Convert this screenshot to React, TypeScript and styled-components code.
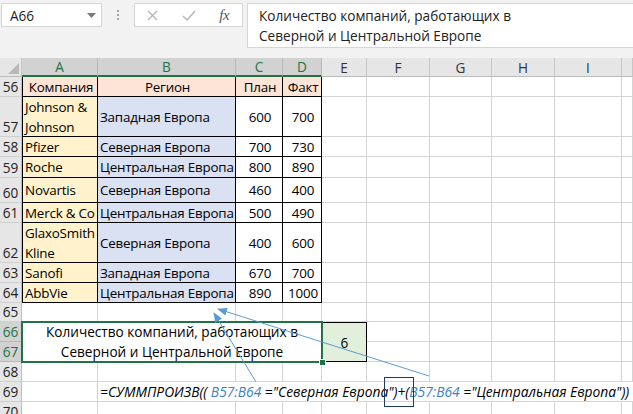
import React from "react";
import styled, { createGlobalStyle } from "styled-components";

const FONT = `"Open Sans", "Noto Sans", "Liberation Sans", sans-serif`;

const GlobalStyle = createGlobalStyle`
  html, body { margin: 0; padding: 0; background: #fff; }
  body { font-family: ${FONT}; overflow: hidden; }
  *, *::before, *::after { box-sizing: border-box; }
`;

const Root = styled.div`
  position: relative;
  width: 633px;
  height: 414px;
  overflow: hidden;
  background: #fff;
  font-family: ${FONT};
`;

/* ---------- formula bar ---------- */
const TopBar = styled.div`
  display: flex;
  align-items: flex-start;
  height: 58px;
  padding: 3px 0 0 1px;
  background: #f2f2f2;
`;

const NameBox = styled.div`
  display: flex;
  align-items: center;
  justify-content: space-between;
  width: 101px;
  height: 24px;
  padding: 0 5px 0 8px;
  background: #fff;
  border: 1px solid #d6d6d6;
  font-size: 13.6px;
  color: #222;
`;

const Grip = styled.div`
  width: 32px;
  height: 24px;
  display: flex;
  flex-direction: column;
  align-items: center;
  justify-content: center;
  gap: 2px;
`;

const GripDot = styled.span`
  width: 2px;
  height: 2px;
  background: #a6a6a6;
`;

const FxBox = styled.div`
  display: flex;
  width: 109px;
  height: 24px;
  background: #fff;
  border: 1px solid #d6d6d6;
`;

const FxSlot = styled.div`
  flex: 1;
  display: flex;
  align-items: center;
  justify-content: center;
`;

const FxLabel = styled.span`
  font-family: "Liberation Serif", "DejaVu Serif", serif;
  font-style: italic;
  font-size: 15px;
  color: #555;
  letter-spacing: -0.5px;
`;

const FormulaInput = styled.div`
  flex: 1;
  margin-left: 4px;
  height: 45px;
  padding: 2px 0 0 11px;
  background: #fff;
  border: 1px solid #d6d6d6;
  border-right: none;
  font-size: 13.6px;
  line-height: 20px;
  color: #222;
  white-space: pre;
`;

/* ---------- sheet grid ---------- */
const Sheet = styled.div`
  display: grid;
  grid-template-columns: 22px 76px 138px 47px 39px 45px 63px 62px 63px 67px 1fr;
  grid-template-rows: 19px 20px 40px 20px 21px 25px 20px 40px 20px 20px 19px 20px 20px 20px 20px 20px;
  font-size: 13.4px;
  line-height: 19px;
`;

const Corner = styled.div`
  background: #e6e6e6;
  border-right: 1px solid #c6c6c6;
  border-bottom: 1px solid #bdbdbd;
  display: flex;
  align-items: flex-end;
  justify-content: flex-end;
  padding: 0 2px 2px 0;
`;

const ColHead = styled.div<{ $sel?: boolean }>`
  display: flex;
  align-items: center;
  justify-content: center;
  font-size: 13.6px;
  background: ${(p) => (p.$sel ? "#d2d2d2" : "#e6e6e6")};
  color: ${(p) => (p.$sel ? "#217346" : "#333")};
  border-right: 1px solid ${(p) => (p.$sel ? "#b8b8b8" : "#c6c6c6")};
  border-bottom: ${(p) => (p.$sel ? "2px solid #217346" : "1px solid #bdbdbd")};
`;

const RowHead = styled.div<{ $sel?: boolean }>`
  display: flex;
  align-items: flex-end;
  justify-content: center;
  font-size: 13.6px;
  background: ${(p) => (p.$sel ? "#d2d2d2" : "#e6e6e6")};
  color: ${(p) => (p.$sel ? "#217346" : "#222")};
  border-right: 1px solid #bdbdbd;
  border-bottom: 1px solid ${(p) => (p.$sel ? "#b8b8b8" : "#cfcfcf")};
`;

const Cell = styled.div<{
  $fill?: string;
  $center?: boolean;
  $table?: boolean;
  $leftEdge?: boolean;
}>`
  display: flex;
  align-items: center;
  justify-content: ${(p) => (p.$center ? "center" : "flex-start")};
  text-align: ${(p) => (p.$center ? "center" : "left")};
  padding: 0 0 0 2px;
  background: ${(p) => p.$fill ?? "#fff"};
  border-right: 1px solid ${(p) => (p.$table ? "#000" : "#d4d4d4")};
  border-bottom: 1px solid ${(p) => (p.$table ? "#000" : "#d4d4d4")};
  border-left: ${(p) => (p.$leftEdge ? "1px solid #000" : "none")};
  color: #000;
  letter-spacing: -0.2px;
  white-space: pre;
  line-height: 20px;
  overflow: hidden;
`;

const NoteCell = styled.div`
  position: relative;
  grid-column: 2 / 6;
  grid-row: 12 / 14;
  display: flex;
  align-items: center;
  justify-content: center;
  text-align: center;
  white-space: pre;
  font-size: 13.6px;
  line-height: 20px;
  background: #fff;
  color: #000;
  z-index: 2;

  &::after {
    content: "";
    position: absolute;
    inset: -1px -1px -1px -1px;
    border: 2px solid #217346;
  }
  &::before {
    content: "";
    position: absolute;
    right: -4px;
    bottom: -4px;
    width: 7px;
    height: 7px;
    background: #217346;
    border: 1px solid #fff;
    z-index: 3;
  }
`;

const ResultCell = styled.div`
  grid-column: 6 / 7;
  grid-row: 12 / 14;
  display: flex;
  align-items: center;
  justify-content: center;
  font-size: 13.6px;
  background: #e2efda;
  border: 1px solid #000;
  color: #000;
  z-index: 1;
`;

const FormulaCell = styled.div`
  grid-column: span 9;
  display: flex;
  align-items: center;
  padding-left: 2px;
  border-bottom: 1px solid #d4d4d4;
  font-size: 13.8px;
  font-style: italic;
  white-space: pre;
  color: #000;
  overflow: visible;
`;

const Ref = styled.span`
  color: #3f7fc4;
`;

const Boxed = styled.span`
  position: relative;

  &::after {
    content: "";
    position: absolute;
    left: -4px;
    right: -5px;
    top: -5px;
    bottom: -6px;
    border: 1.5px solid #1f3a60;
  }
`;

const Arrows = styled.svg`
  position: absolute;
  left: 0;
  top: 0;
  pointer-events: none;
  z-index: 5;
`;

/* ---------- data ---------- */
const COLS = ["A", "B", "C", "D", "E", "F", "G", "H", "I", "J"];
const SEL_COLS = ["A", "B", "C", "D"];

type DataRow = { n: number; company: string; region: string; plan: number; fact: number };

const DATA: DataRow[] = [
  { n: 57, company: "Johnson &\nJohnson", region: "Западная Европа", plan: 600, fact: 700 },
  { n: 58, company: "Pfizer", region: "Северная Европа", plan: 700, fact: 730 },
  { n: 59, company: "Roche", region: "Центральная Европа", plan: 800, fact: 890 },
  { n: 60, company: "Novartis", region: "Северная Европа", plan: 460, fact: 400 },
  { n: 61, company: "Merck & Co", region: "Центральная Европа", plan: 500, fact: 490 },
  { n: 62, company: "GlaxoSmith\nKline", region: "Северная Европа", plan: 400, fact: 600 },
  { n: 63, company: "Sanofi", region: "Западная Европа", plan: 670, fact: 700 },
  { n: 64, company: "AbbVie", region: "Центральная Европа", plan: 890, fact: 1000 },
];

const Blanks = ({ count, prefix }: { count: number; prefix: string }) => (
  <>
    {Array.from({ length: count }, (_, i) => (
      <Cell key={`${prefix}-${i}`} />
    ))}
  </>
);

const PEACH = "#fce4d6";
const YELLOW = "#fff2cc";
const BLUE = "#d9e1f2";

export default function App() {
  return (
    <Root>
      <GlobalStyle />
      <TopBar>
        <NameBox>
          <span>A66</span>
          <svg width="9" height="5" viewBox="0 0 9 5">
            <path d="M0 0 H9 L4.5 5 Z" fill="#7a7a7a" />
          </svg>
        </NameBox>
        <Grip>
          <GripDot />
          <GripDot />
          <GripDot />
        </Grip>
        <FxBox>
          <FxSlot>
            <svg width="11" height="11" viewBox="0 0 11 11">
              <path d="M1 1 L10 10 M10 1 L1 10" stroke="#b5b5b5" strokeWidth="1.3" />
            </svg>
          </FxSlot>
          <FxSlot>
            <svg width="14" height="11" viewBox="0 0 14 11">
              <path d="M1 6 L5 10 L13 1" stroke="#b5b5b5" strokeWidth="1.4" fill="none" />
            </svg>
          </FxSlot>
          <FxSlot>
            <FxLabel>fx</FxLabel>
          </FxSlot>
        </FxBox>
        <FormulaInput>{"Количество компаний, работающих в\nСеверной и Центральной Европе"}</FormulaInput>
      </TopBar>

      <Sheet>
        <Corner>
          <svg width="11" height="11" viewBox="0 0 11 11">
            <path d="M11 0 V11 H0 Z" fill="#b9b9b9" />
          </svg>
        </Corner>
        {COLS.map((c) => (
          <ColHead key={c} $sel={SEL_COLS.includes(c)}>
            {c === "J" ? "" : c}
          </ColHead>
        ))}

        {/* row 56 : table header */}
        <RowHead>56</RowHead>
        <Cell $table $leftEdge $center $fill={PEACH}>Компания</Cell>
        <Cell $table $center $fill={PEACH}>Регион</Cell>
        <Cell $table $center $fill={PEACH}>План</Cell>
        <Cell $table $center $fill={PEACH}>Факт</Cell>
        <Blanks count={6} prefix="r56" />

        {DATA.map((r) => (
          <React.Fragment key={r.n}>
            <RowHead>{r.n}</RowHead>
            <Cell $table $leftEdge $fill={YELLOW}>{r.company}</Cell>
            <Cell $table $fill={BLUE}>{r.region}</Cell>
            <Cell $table $center>{r.plan}</Cell>
            <Cell $table $center>{r.fact}</Cell>
            <Blanks count={6} prefix={`r${r.n}`} />
          </React.Fragment>
        ))}

        <RowHead>65</RowHead>
        <Blanks count={10} prefix="r65" />

        <NoteCell>{"Количество компаний, работающих в\nСеверной и Центральной Европе"}</NoteCell>
        <ResultCell>6</ResultCell>

        <RowHead $sel>66</RowHead>
        <Blanks count={5} prefix="r66" />
        <RowHead $sel>67</RowHead>
        <Blanks count={5} prefix="r67" />

        <RowHead>68</RowHead>
        <Blanks count={10} prefix="r68" />

        <RowHead>69</RowHead>
        <Cell />
        <FormulaCell>
          {"=СУММПРОИЗВ(( "}
          <Ref>B57:B64</Ref>
          {' ="Северная Европа'}
          <Boxed>{'")+('}</Boxed>
          {" "}
          <Ref>B57:B64</Ref>
          {' ="Центральная Европа"))'}
        </FormulaCell>

        <RowHead>70</RowHead>
        <Blanks count={10} prefix="r70" />
      </Sheet>

      <Arrows width="633" height="414" viewBox="0 0 633 414">
        <defs>
          <marker
            id="ah"
            viewBox="0 0 10 10"
            refX="9"
            refY="5"
            markerWidth="10"
            markerHeight="10"
            markerUnits="userSpaceOnUse"
            orient="auto"
          >
            <path d="M0 1 L10 5 L0 9 Z" fill="#5b9bd5" />
          </marker>
        </defs>
        <line x1="256" y1="382" x2="214" y2="313" stroke="#5b9bd5" strokeWidth="1" markerEnd="url(#ah)" />
        <line x1="429" y1="376" x2="218" y2="309" stroke="#5b9bd5" strokeWidth="1" markerEnd="url(#ah)" />
      </Arrows>
    </Root>
  );
}
